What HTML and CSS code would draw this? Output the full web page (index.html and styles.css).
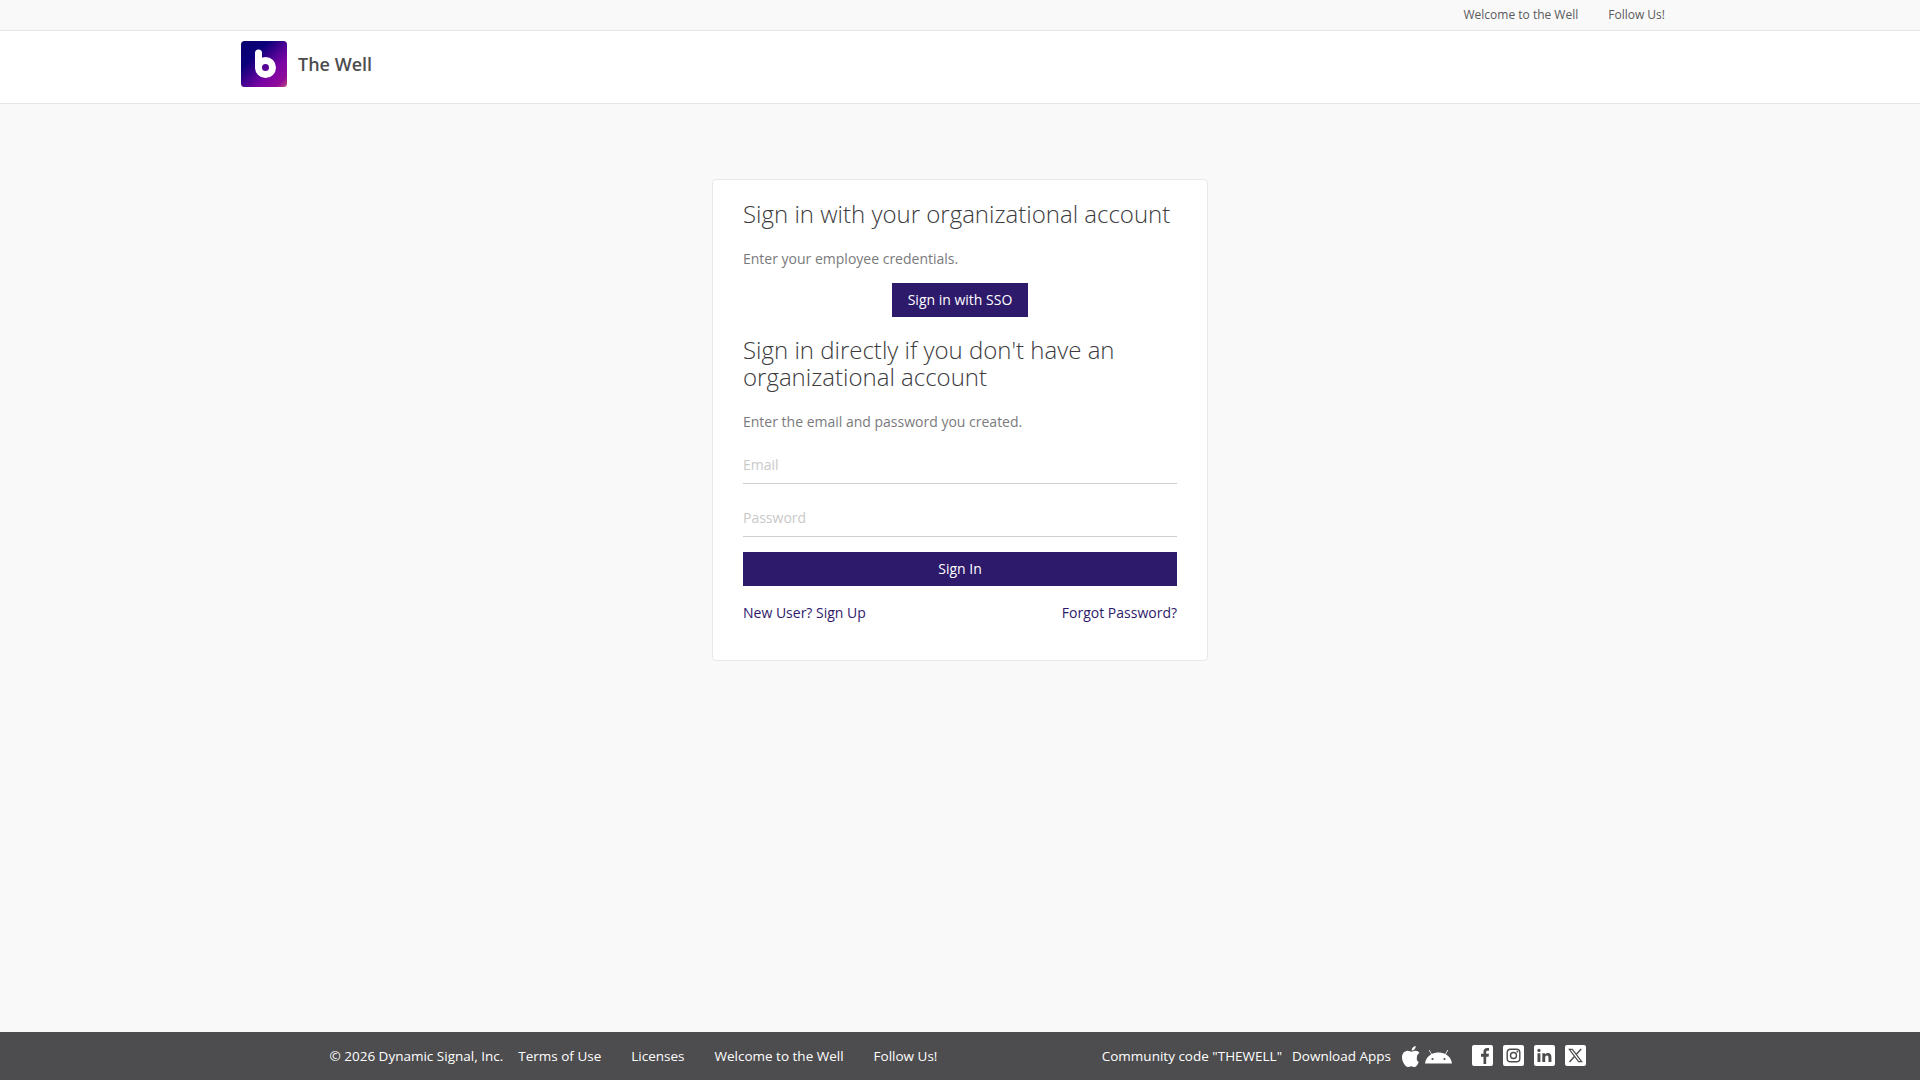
FILE: index.html
```
<!DOCTYPE html>
<html lang="en">
<head>
<meta charset="utf-8">
<title>The Well</title>
<link rel="stylesheet" href="styles.css">
</head>
<body>
<div class="topbar">
  <nav class="topnav">
    <a href="#">Welcome to the Well</a>
    <a href="#">Follow Us!</a>
  </nav>
</div>
<header class="brandbar">
  <div class="brand">
    <svg class="logo" viewBox="0 0 46 46" aria-hidden="true">
      <defs>
        <linearGradient id="lg" x1="0" y1="0" x2="1" y2="1">
          <stop offset="0" stop-color="#08006e"/>
          <stop offset="0.3" stop-color="#0c007a"/>
          <stop offset="0.68" stop-color="#7a04a4"/>
          <stop offset="0.88" stop-color="#8f0c9a"/>
          <stop offset="1" stop-color="#c04a78"/>
        </linearGradient>
      </defs>
      <rect width="46" height="46" rx="3.5" fill="url(#lg)"/>
      <path d="M17.500 12V26" fill="none" stroke="#fff" stroke-width="7" stroke-linecap="round"/>
      <circle cx="24.500" cy="26.500" r="7" fill="none" stroke="#fff" stroke-width="7"/>
    </svg>
    <span class="brand-name">The Well</span>
  </div>
</header>
<main class="content">
  <section class="card">
    <h2 class="title">Sign in with your organizational account</h2>
    <p class="hint">Enter your employee credentials.</p>
    <div class="sso-row"><button class="btn btn-sso" type="button">Sign in with SSO</button></div>
    <h2 class="title title-direct">Sign in directly if you don't have an organizational account</h2>
    <p class="hint hint-direct">Enter the email and password you created.</p>
    <form class="form">
      <input class="field" type="text" placeholder="Email">
      <input class="field field-pass" type="password" placeholder="Password">
      <button class="btn btn-block" type="button">Sign In</button>
    </form>
    <div class="links">
      <a href="#">New User? Sign Up</a>
      <a href="#">Forgot Password?</a>
    </div>
  </section>
</main>
<footer class="footer">
  <div class="footer-left">
    <span class="copy">© 2026 Dynamic Signal, Inc.</span>
    <a href="#">Terms of Use</a>
    <a href="#">Licenses</a>
    <a href="#">Welcome to the Well</a>
    <a href="#">Follow Us!</a>
  </div>
  <div class="footer-right">
    <span class="code">Community code "THEWELL"</span>
    <span>Download Apps</span>
    <span class="apps">
      <svg class="apple" viewBox="0 0 18 21" aria-hidden="true"><path fill="#fff" d="M14.900 11.100c0-2 1-3.200 2.600-4.200-1-1.300-2.300-2-4-2.100-1.700-.1-3.100 1-4 1-.9 0-2.200-1-3.600-1C3.200 4.900 0 6.800 0 11.400c0 1.400.3 2.800.8 4.200.7 1.900 3.100 5.500 5 5.400 1.100 0 1.900-.8 3.300-.8s2.100.8 3.300.8c2 0 3.600-3.200 4.300-5.100-2.600-1.100-1.800-3.800-1.800-4.800zM12.500 3.200C13.500 2.100 13.800.9 13.700 0c-1.100.1-2.100.7-2.900 1.500C10 2.400 9.600 3.500 9.700 4.600c1.100.1 2-.5 2.800-1.400z"/></svg>
      <svg class="android" viewBox="0 0 27 17" aria-hidden="true"><path fill="#fff" d="M0 15.500C.5 11.500 2.800 8.200 6.200 6.300L4 2.400c-.2-.4.300-.7.600-.3l2.200 3.900C8.800 5 11.100 4.500 13.500 4.500s4.700.5 6.700 1.500l2.200-3.900c.3-.4.800-.1.600.3l-2.200 3.900c3.400 1.900 5.700 5.200 6.200 9.200z"/><circle cx="7.500" cy="11" r="1.100" fill="#4d4c4e"/><circle cx="19.500" cy="11" r="1.100" fill="#4d4c4e"/></svg>
    </span>
    <span class="socials">
      <svg class="social" viewBox="0 0 21 21" aria-hidden="true"><rect width="21" height="21" rx="2" fill="#fff"/><path fill="#4d4c4e" d="M11.500 19V11.700H9V8.800h2.500V6.700C11.500 4.300 13 3 15.100 3c1 0 1.700.1 1.900.1v2.600h-1.400c-1.200 0-1.400.6-1.400 1.400v1.700h2.800l-.4 2.900h-2.400V19z"/></svg>
      <svg class="social" viewBox="0 0 21 21" aria-hidden="true"><rect width="21" height="21" rx="2" fill="#fff"/><rect x="4.200" y="4.200" width="12.600" height="12.600" rx="3.400" fill="none" stroke="#4d4c4e" stroke-width="1.400"/><circle cx="10.500" cy="10.500" r="3" fill="none" stroke="#4d4c4e" stroke-width="1.400"/><circle cx="14.300" cy="6.700" r=".9" fill="#4d4c4e"/></svg>
      <svg class="social" viewBox="0 0 21 21" aria-hidden="true"><rect width="21" height="21" rx="2" fill="#fff"/><path fill="#4d4c4e" d="M3.500 8.200h2.900V17H3.500zM4.950 3.800a1.650 1.650 0 1 1 0 3.300 1.650 1.650 0 0 1 0-3.300zM8.300 8.200H11v1.200c.5-.8 1.500-1.450 2.900-1.450 2.700 0 3.500 1.700 3.500 4.100V17h-2.900v-4.400c0-1.200-.3-2.200-1.500-2.200-1.300 0-1.800 1-1.800 2.200V17H8.300z"/></svg>
      <svg class="social" viewBox="0 0 21 21" aria-hidden="true"><rect width="21" height="21" rx="2" fill="#fff"/><path fill="none" stroke="#4d4c4e" stroke-width="1.200" d="M4.300 4.300h3.100l9.300 12.400h-3.100z"/><path fill="none" stroke="#4d4c4e" stroke-width="1.400" d="M16.200 4L11.400 9.300M9.400 11.500L4.500 17"/></svg>
    </span>
  </div>
</footer>
</body>
</html>
```
FILE: styles.css
```
* { box-sizing: border-box; }
html, body { height: 100%; }
body {
  margin: 0;
  min-height: 100vh;
  display: flex;
  flex-direction: column;
  background: #f9f9f9;
  font-family: "Open Sans", "Liberation Sans", sans-serif;
  font-size: 14px;
  line-height: 20px;
  color: #4d4c4e;
}
a { color: inherit; text-decoration: none; }

.topbar {
  height: 31px;
  flex: none;
  border-bottom: 1px solid #e6e6e6;
  background: #f9f9f9;
  display: flex;
  justify-content: flex-end;
  padding: 0 240px;
}
.topnav {
  display: flex;
  gap: 30px;
  padding-right: 15px;
  font-size: 12px;
  line-height: 29px;
  color: #5a5a5c;
}

.brandbar {
  height: 73px;
  flex: none;
  background: #fff;
  border-bottom: 1px solid #e6e6e6;
  padding: 10px 241px 0;
}
.brand { display: flex; align-items: center; gap: 11px; height: 46px; }
.logo { width: 46px; height: 46px; display: block; }
.brand-name { font-size: 18px; font-weight: 600; color: #4d4c4e; }

.content {
  flex: 1;
  display: flex;
  justify-content: center;
  align-items: flex-start;
  padding-top: 75px;
}
.card {
  width: 496px;
  height: 482px;
  background: #fff;
  border: 1px solid #e8e8e8;
  border-radius: 4px;
  padding: 20px 30px 0;
}
.title {
  margin: 0;
  font-size: 24px;
  line-height: 27px;
  font-weight: 300;
  color: #3c3b3d;
}
.hint { margin: 22px 0 0; color: #7a7a7c; font-size: 14px; line-height: 20px; }
.sso-row { display: flex; justify-content: center; margin-top: 14px; }
.btn {
  height: 34px;
  border: 0;
  border-radius: 0;
  background: #2e1a6b;
  color: #fff;
  font-family: inherit;
  font-size: 14px;
  padding: 0 0 2px;
  white-space: nowrap;
}
.btn-sso { width: 136px; }
.btn-block { display: block; width: 100%; margin-top: 15px; }
.title-direct { margin-top: 19px; }
.hint-direct { margin-top: 22px; }
.form { margin-top: 8px; }
.field {
  display: block;
  width: 100%;
  height: 43px;
  border: 0;
  border-bottom: 1px solid #cfcfcf;
  outline: 0;
  padding: 6px 0 0;
  background: transparent;
  font-family: inherit;
  font-size: 14px;
  color: #4d4c4e;
}
.field::placeholder { color: #c9c9c9; opacity: 1; }
.field + .field { margin-top: 10px; }
.form .field:first-child { height: 44px; }
.form .field-pass { padding-top: 4px; }
.links {
  display: flex;
  justify-content: space-between;
  margin-top: 17px;
  color: #2e1a6b;
}

.footer {
  height: 48px;
  flex: none;
  background: #4d4c4e;
  color: #fff;
  font-size: 13.5px;
  display: flex;
  align-items: center;
  justify-content: space-between;
  padding: 0 334px 0 329.5px;
}
.footer-left, .footer-right { display: flex; align-items: center; }
.footer-left a { margin-left: 30px; }
.footer-left .copy + a { margin-left: 15px; }
.footer-right > span + span { margin-left: 10px; }
.footer-right .apps { display: flex; align-items: center; gap: 5px; margin-left: 11px; }
.apple { width: 18px; height: 21px; display: block; }
.android { width: 27px; height: 17px; display: block; }
.footer-right .socials { display: flex; gap: 10px; margin-left: 20px; margin-top: -1px; }
.social { width: 21px; height: 21px; display: block; }
```
